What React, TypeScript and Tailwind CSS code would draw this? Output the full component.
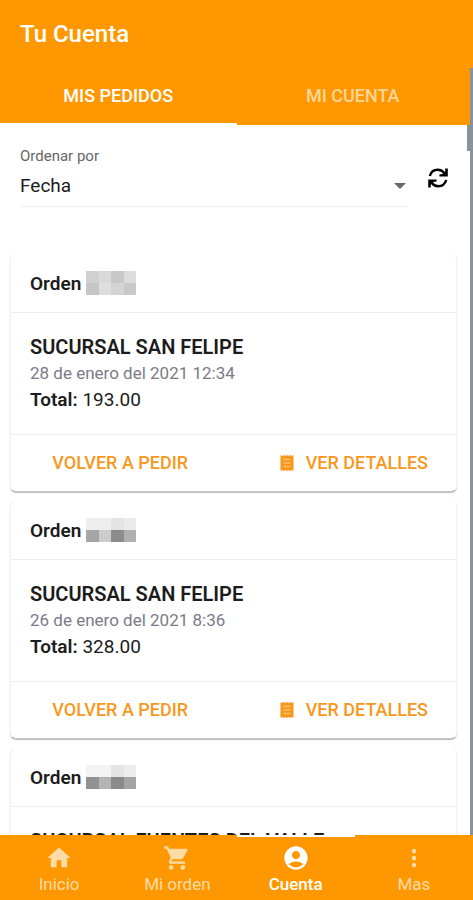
import React from 'react'
import { MdAccountCircle, MdHome, MdMoreVert, MdShoppingCart } from 'react-icons/md'

type Order = {
  id: number
  branch: string
  date?: string
  total?: string
  mask: string[]
}

const orders: Order[] = [
  {
    id: 1,
    branch: 'SUCURSAL SAN FELIPE',
    date: '28 de enero del 2021 12:34',
    total: '193.00',
    mask: ['bg-[#d0d0d0]', 'bg-[#dadada]', 'bg-[#c8c8c8]', 'bg-[#dcdcdc]', 'bg-[#c6c6c6]', 'bg-[#dedede]', 'bg-[#d4d4d4]', 'bg-[#c9c9c9]'],
  },
  {
    id: 2,
    branch: 'SUCURSAL SAN FELIPE',
    date: '26 de enero del 2021 8:36',
    total: '328.00',
    mask: ['bg-[#eeeeee]', 'bg-[#eeeeee]', 'bg-[#e4e4e4]', 'bg-[#ebebeb]', 'bg-[#a6a6a6]', 'bg-[#cccccc]', 'bg-[#8c8c8c]', 'bg-[#b0b0b0]'],
  },
  {
    id: 3,
    branch: 'SUCURSAL FUENTES DEL VALLE',
    mask: ['bg-[#f3f3f3]', 'bg-[#f3f3f3]', 'bg-[#e4e4e4]', 'bg-[#ededed]', 'bg-[#929292]', 'bg-[#b4b4b4]', 'bg-[#8a8a8a]', 'bg-[#a4a4a4]'],
  },
]

const navItems = [
  { label: 'Inicio', icon: MdHome, active: false },
  { label: 'Mi orden', icon: MdShoppingCart, active: false },
  { label: 'Cuenta', icon: MdAccountCircle, active: true },
  { label: 'Mas', icon: MdMoreVert, active: false },
]

function RefreshIcon() {
  return (
    <svg viewBox="0 0 20 20" className="size-5" fill="none" aria-hidden="true">
      <path d="M1.8 8C2.8 4.4 6 1.8 9.8 1.8c2.7 0 4.9 1.1 6.6 3.4M18.2 12c-1 3.6-4.2 6.2-8 6.2-2.7 0-4.9-1.1-6.6-3.4" stroke="currentColor" strokeWidth="2.4" />
      <path d="M19.8 0.4V8.4H11.4V6.4L14.4 6L17.2 3.4V0.4ZM0.2 19.6V11.6H8.6V13.6L5.6 14L2.8 16.6V19.6Z" fill="currentColor" />
    </svg>
  )
}

function ReceiptIcon() {
  return (
    <svg viewBox="0 0 14 18" className="h-[18px] w-[14px]" aria-hidden="true">
      <path d="M0.5 1l1.6 1L3.8 1l1.6 1L7 1l1.6 1 1.6-1 1.7 1 1.6-1v16l-1.6-1-1.7 1-1.6-1L7 17l-1.6-1-1.6 1-1.7-1-1.6 1z" fill="currentColor" />
      <path d="M3.5 5.5h7M3.5 9h7M3.5 12.5h7" stroke="#ffc067" strokeWidth="1.6" />
    </svg>
  )
}

function OrderCard({ order }: { order: Order }) {
  return (
    <article className="rounded-md border-x border-b border-x-[#f3f3f3] border-b-[#c4c4c4] bg-white shadow-[0_1px_1px_#bbbbbb]">
      <h2 className="flex h-15 items-center gap-[5px] border-b border-[#efefef] px-[19px] pt-[3px] text-[19px] font-semibold">
        Orden
        <span className="mb-[2px] grid h-6 w-[50px] grid-cols-4 grid-rows-2">
          {order.mask.map((shade, i) => (
            <span key={i} className={shade} />
          ))}
        </span>
      </h2>
      <div className="px-[19px] py-5">
        <h3 className="text-[20px] leading-7 font-semibold">{order.branch}</h3>
        {order.date && <p className="text-[17px] leading-[25px] text-[#7b7b88]">{order.date}</p>}
        {order.total && (
          <p className="text-[19px] leading-7">
            <strong className="font-semibold">Total:</strong> {order.total}
          </p>
        )}
      </div>
      {order.total && (
        <div className="grid h-[57px] grid-cols-2 border-t border-[#efefef] text-lg font-medium text-[#f7981d]">
          <button type="button" className="pr-1">VOLVER A PEDIR</button>
          <button type="button" className="flex items-center justify-end gap-3 pr-7">
            <ReceiptIcon />
            VER DETALLES
          </button>
        </div>
      )}
    </article>
  )
}

export default function App() {
  return (
    <div className="relative flex h-screen flex-col overflow-hidden bg-white font-['Roboto','Liberation_Sans',sans-serif] text-[#1c1c1c]">
      <header className="shrink-0 bg-[#ff9800] text-white">
        <h1 className="flex h-17 items-center px-5 text-2xl font-medium">Tu Cuenta</h1>
        <div role="tablist" className="grid h-[57px] grid-cols-2 text-lg font-medium">
          <button type="button" role="tab" aria-selected="true" className="border-b-2 border-white">
            MIS PEDIDOS
          </button>
          <button type="button" role="tab" aria-selected="false" className="border-b-2 border-transparent pr-1 text-[#ffd699]">
            MI CUENTA
          </button>
        </div>
      </header>

      <main className="min-h-0 flex-1 overflow-hidden pr-4 pl-[10px]">
        <div className="flex items-start pt-[19px] pl-[10px]">
          <div className="relative flex-1 border-b border-[#efefef]">
            <label htmlFor="sort" className="block text-[15px] leading-6 text-[#666666]">Ordenar por</label>
            <select id="sort" defaultValue="fecha" className="block h-[38px] w-full appearance-none bg-transparent pb-[2px] text-[19px]">
              <option value="fecha">Fecha</option>
              <option value="total">Total</option>
            </select>
            <svg viewBox="0 0 12 6" className="pointer-events-none absolute right-[2px] bottom-[17px] h-[6px] w-3 fill-[#666666]" aria-hidden="true">
              <path d="M0 0h12L6 6z" />
            </svg>
          </div>
          <button type="button" aria-label="Actualizar" className="mt-6 mr-[9px] ml-5 text-black">
            <RefreshIcon />
          </button>
        </div>
        <div className="mt-[46px] flex flex-col gap-2">
          {orders.map((order) => (
            <OrderCard key={order.id} order={order} />
          ))}
        </div>
      </main>

      <nav className="grid h-[65px] shrink-0 grid-cols-4 bg-[#ff9800]">
        {navItems.map(({ label, icon: Icon, active }) => (
          <a
            key={label}
            href="#"
            aria-current={active ? 'page' : undefined}
            className={
              active
                ? 'flex flex-col items-center border-t-2 border-white pt-[7px] text-white'
                : 'flex flex-col items-center border-t-2 border-transparent pt-[7px] text-[#ffdba6]'
            }
          >
            <Icon className="size-7" aria-hidden="true" />
            <span className={active ? 'text-[17px] leading-6 font-medium' : 'text-[17px] leading-6'}>{label}</span>
          </a>
        ))}
      </nav>

      {/* scrollbar track and thumb */}
      <div className="absolute top-17 right-0 bottom-[65px] w-[3px] bg-[#87929a]" />
      <div className="absolute top-[125px] right-0 h-[26px] w-[6px] bg-[#87929a]" />
    </div>
  )
}
